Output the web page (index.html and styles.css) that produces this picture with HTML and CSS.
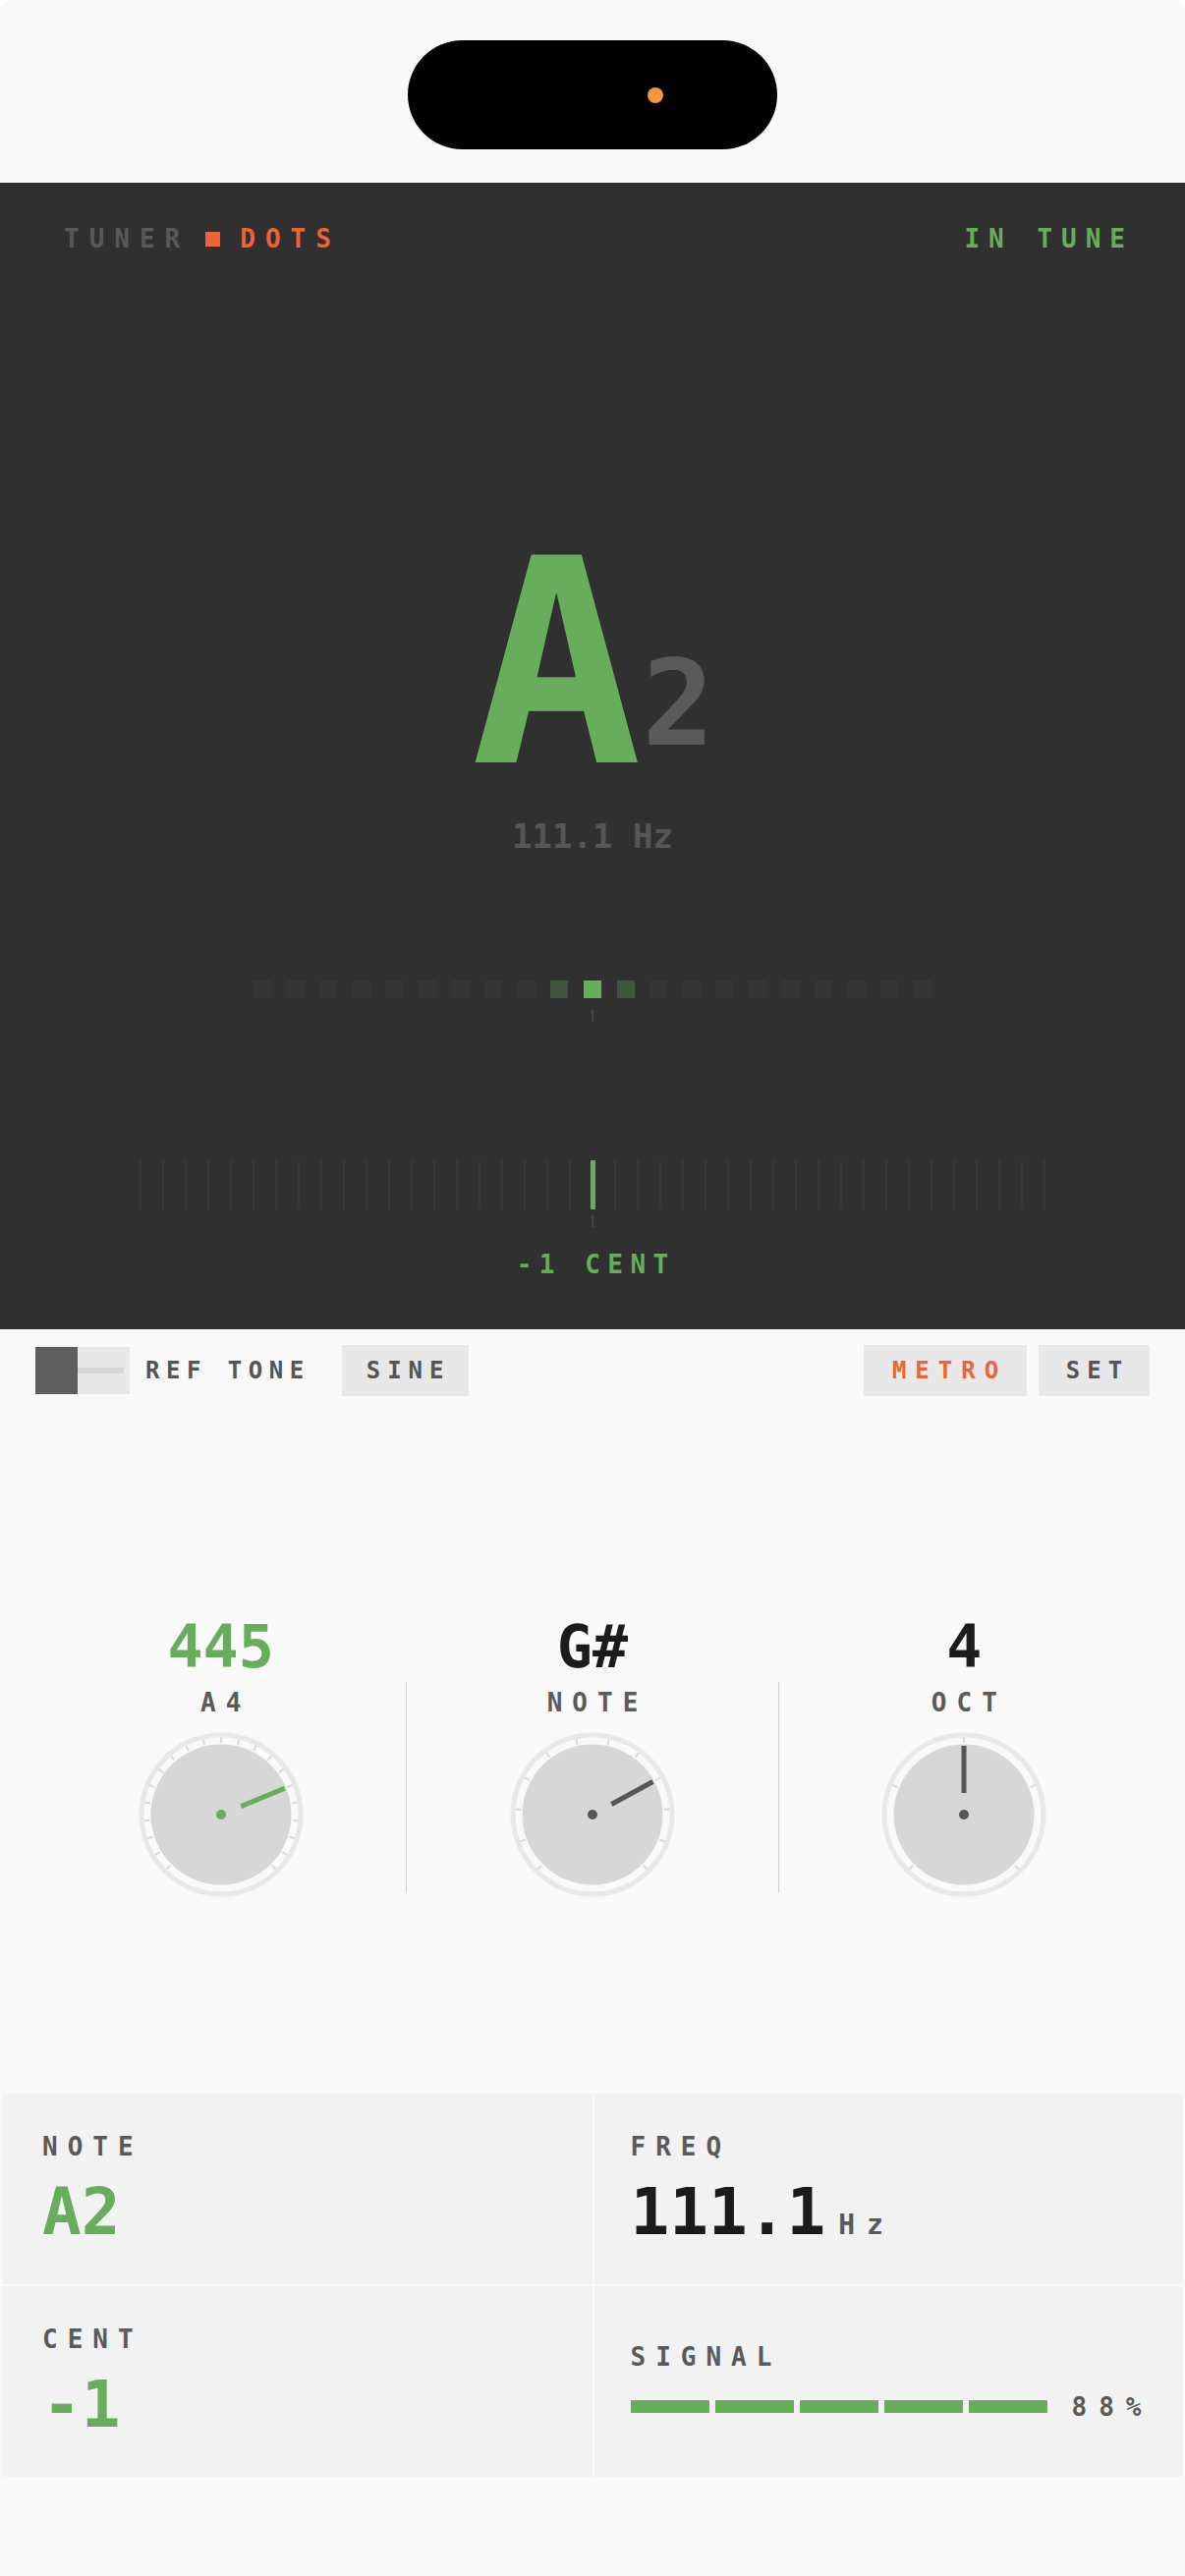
FILE: index.html
```html
<!DOCTYPE html>
<html lang="en">
<head>
<meta charset="utf-8">
<title>Tuner</title>
<link rel="stylesheet" href="styles.css">
</head>
<body>
<div class="screen">
  <div class="status">
    <div class="island"><span class="cam"></span></div>
  </div>

  <section class="tuner">
    <div class="head">
      <div class="brand"><span class="muted">TUNER</span><span class="sq"></span><span class="accent">DOTS</span></div>
      <div class="ok">IN TUNE</div>
    </div>

    <div class="note-row"><span class="big">A</span><span class="sub">2</span></div>
    <div class="hz">111.1 Hz</div>

    <div class="dots">
      <i class="dot"></i><i class="dot"></i><i class="dot"></i><i class="dot"></i><i class="dot"></i>
      <i class="dot"></i><i class="dot"></i><i class="dot"></i><i class="dot"></i><i class="dot near"></i>
      <i class="dot on"></i>
      <i class="dot near"></i><i class="dot"></i><i class="dot"></i><i class="dot"></i><i class="dot"></i>
      <i class="dot"></i><i class="dot"></i><i class="dot"></i><i class="dot"></i><i class="dot"></i>
    </div>
    <div class="mark first"></div>

    <div class="ticks">
      <i class="tk"></i><i class="tk"></i><i class="tk"></i><i class="tk"></i><i class="tk"></i>
      <i class="tk"></i><i class="tk"></i><i class="tk"></i><i class="tk"></i><i class="tk"></i>
      <i class="tk"></i><i class="tk"></i><i class="tk"></i><i class="tk"></i><i class="tk"></i>
      <i class="tk"></i><i class="tk"></i><i class="tk"></i><i class="tk"></i><i class="tk"></i>
      <i class="tk on"></i>
      <i class="tk"></i><i class="tk"></i><i class="tk"></i><i class="tk"></i><i class="tk"></i>
      <i class="tk"></i><i class="tk"></i><i class="tk"></i><i class="tk"></i><i class="tk"></i>
      <i class="tk"></i><i class="tk"></i><i class="tk"></i><i class="tk"></i><i class="tk"></i>
      <i class="tk"></i><i class="tk"></i><i class="tk"></i><i class="tk"></i><i class="tk"></i>
    </div>
    <div class="mark second"></div>
    <div class="cent">-1 CENT</div>
  </section>

  <div class="controls">
    <div class="toggle"><span class="knob"></span><span class="track"></span></div>
    <span class="lbl">REF TONE</span>
    <div class="btn sine">SINE</div>
    <div class="spacer"></div>
    <div class="btn metro">METRO</div>
    <div class="btn set">SET</div>
  </div>

  <div class="dials">
    <div class="dial">
      <div class="val g">445</div>
      <div class="cap">A4</div>
      <svg class="knobsvg" width="168" height="168" viewBox="-84 -84 168 168">
        <circle r="81" class="ring"/>
        <circle r="71.5" class="disk"/>
        <g class="tks">
          <line y1="-73" y2="-78.5" transform="rotate(-135)"/>
          <line y1="-73" y2="-78.5" transform="rotate(-121.5)"/>
          <line y1="-73" y2="-78.5" transform="rotate(-108)"/>
          <line y1="-73" y2="-78.5" transform="rotate(-94.5)"/>
          <line y1="-73" y2="-78.5" transform="rotate(-81)"/>
          <line y1="-73" y2="-78.5" transform="rotate(-67.5)"/>
          <line y1="-73" y2="-78.5" transform="rotate(-54)"/>
          <line y1="-73" y2="-78.5" transform="rotate(-40.5)"/>
          <line y1="-73" y2="-78.5" transform="rotate(-27)"/>
          <line y1="-73" y2="-78.5" transform="rotate(-13.5)"/>
          <line y1="-73" y2="-78.5" transform="rotate(0)"/>
          <line y1="-73" y2="-78.5" transform="rotate(13.5)"/>
          <line y1="-73" y2="-78.5" transform="rotate(27)"/>
          <line y1="-73" y2="-78.5" transform="rotate(40.5)"/>
          <line y1="-73" y2="-78.5" transform="rotate(54)"/>
          <line y1="-73" y2="-78.5" transform="rotate(67.5)"/>
          <line y1="-73" y2="-78.5" transform="rotate(81)"/>
          <line y1="-73" y2="-78.5" transform="rotate(94.5)"/>
          <line y1="-73" y2="-78.5" transform="rotate(108)"/>
          <line y1="-73" y2="-78.5" transform="rotate(121.5)"/>
          <line y1="-73" y2="-78.5" transform="rotate(135)"/>
        </g>
        <line class="needle green" y1="-22" y2="-70" transform="rotate(67.5)"/>
        <circle r="5" class="hub green"/>
      </svg>
    </div>
    <div class="vr"></div>
    <div class="dial">
      <div class="val">G#</div>
      <div class="cap">NOTE</div>
      <svg class="knobsvg" width="168" height="168" viewBox="-84 -84 168 168">
        <circle r="81" class="ring"/>
        <circle r="71.5" class="disk"/>
        <g class="tks">
          <line y1="-73" y2="-78.5" transform="rotate(-135)"/>
          <line y1="-73" y2="-78.5" transform="rotate(-110.45)"/>
          <line y1="-73" y2="-78.5" transform="rotate(-85.91)"/>
          <line y1="-73" y2="-78.5" transform="rotate(-61.36)"/>
          <line y1="-73" y2="-78.5" transform="rotate(-36.82)"/>
          <line y1="-73" y2="-78.5" transform="rotate(-12.27)"/>
          <line y1="-73" y2="-78.5" transform="rotate(12.27)"/>
          <line y1="-73" y2="-78.5" transform="rotate(36.82)"/>
          <line y1="-73" y2="-78.5" transform="rotate(61.36)"/>
          <line y1="-73" y2="-78.5" transform="rotate(85.91)"/>
          <line y1="-73" y2="-78.5" transform="rotate(110.45)"/>
          <line y1="-73" y2="-78.5" transform="rotate(135)"/>
        </g>
        <line class="needle" y1="-22" y2="-70" transform="rotate(61.36)"/>
        <circle r="5" class="hub"/>
      </svg>
    </div>
    <div class="vr"></div>
    <div class="dial">
      <div class="val">4</div>
      <div class="cap">OCT</div>
      <svg class="knobsvg" width="168" height="168" viewBox="-84 -84 168 168">
        <circle r="81" class="ring"/>
        <circle r="71.5" class="disk"/>
        <g class="tks">
          <line y1="-73" y2="-78.5" transform="rotate(-135)"/>
          <line y1="-73" y2="-78.5" transform="rotate(-67.5)"/>
          <line y1="-73" y2="-78.5" transform="rotate(0)"/>
          <line y1="-73" y2="-78.5" transform="rotate(67.5)"/>
          <line y1="-73" y2="-78.5" transform="rotate(135)"/>
        </g>
        <line class="needle" y1="-22" y2="-70" transform="rotate(0)"/>
        <circle r="5" class="hub"/>
      </svg>
    </div>
  </div>

  <div class="stats">
    <div class="cell left">
      <div class="k">NOTE</div>
      <div class="v g">A2</div>
    </div>
    <div class="cell right">
      <div class="k">FREQ</div>
      <div class="v">111.1<span class="unit">Hz</span></div>
    </div>
    <div class="cell left">
      <div class="k">CENT</div>
      <div class="v g">-1</div>
    </div>
    <div class="cell right">
      <div class="k">SIGNAL</div>
      <div class="sig">
        <div class="bar"><i class="seg"></i><i class="seg"></i><i class="seg"></i><i class="seg"></i><i class="seg"></i></div>
        <span class="pct">88%</span>
      </div>
    </div>
  </div>
</div>
</body>
</html>
```

FILE: styles.css
```css
* { box-sizing: border-box; }

body {
  margin: 0;
  background: #ffffff;
  font-family: "DejaVu Sans Mono", "Liberation Mono", monospace;
}

.screen {
  width: 1206px;
  height: 2622px;
  background: #f9f9f9;
  border-radius: 12px 12px 0 0;
  overflow: hidden;
}

/* status bar */
.status {
  height: 186px;
  padding-top: 41px;
  display: flex;
  justify-content: center;
  align-items: flex-start;
}
.island {
  width: 376px;
  height: 111px;
  border-radius: 56px;
  background: #000;
  display: flex;
  align-items: center;
  justify-content: flex-end;
  padding-right: 116px;
}
.cam {
  width: 16px;
  height: 16px;
  border-radius: 50%;
  background: #f5963f;
}

/* dark tuner panel */
.tuner {
  height: 1167px;
  background: #2f302f;
  display: flex;
  flex-direction: column;
  align-items: center;
}
.head {
  align-self: stretch;
  display: flex;
  justify-content: space-between;
  align-items: center;
  margin-top: 44px;
  padding: 0 52px 0 65px;
  font-size: 26px;
  line-height: 26px;
  letter-spacing: 10px;
  font-weight: bold;
}
.brand { display: flex; align-items: center; }
.muted { color: #595959; }
.accent { color: #ef6337; }
.ok { color: #67ad5b; letter-spacing: 9px; }
.sq {
  width: 15px;
  height: 15px;
  background: #ef6337;
  margin: 0 20px 0 16px;
}

.note-row {
  margin-top: 275px;
  height: 290px;
  font-size: 290px;
  line-height: 1;
  font-weight: bold;
  white-space: nowrap;
}
.big {
  display: inline-block;
  line-height: 1;
  color: #67ad5b;
}
.sub {
  display: inline-block;
  line-height: 1;
  font-size: 122px;
  color: #5a5a5a;
  vertical-align: 18px;
}

.hz {
  margin-top: 13px;
  font-size: 34px;
  line-height: 34px;
  font-weight: bold;
  color: #565656;
}

.dots {
  margin-top: 130px;
  display: flex;
  gap: 15.6px;
}
.dot {
  width: 18px;
  height: 18px;
  background: #343534;
}
.dot.near { background: #3f573d; }
.dot.on { background: #67ad5b; }

.mark {
  width: 2px;
  height: 12px;
  background: #454645;
}
.mark.first { margin-top: 12px; }
.mark.second { margin-top: 6px; }

.ticks {
  margin-top: 141px;
  display: flex;
}
.tk {
  width: 23px;
  height: 50px;
  display: flex;
  justify-content: center;
}
.tk::before {
  content: "";
  width: 2px;
  background: #363736;
}
.tk.on::before {
  width: 5px;
  background: #67ad5b;
}

.cent {
  margin-top: 25px;
  font-size: 26px;
  line-height: 26px;
  letter-spacing: 7.5px;
  padding-left: 7.5px;
  font-weight: bold;
  color: #67ad5b;
}

/* controls row */
.controls {
  display: flex;
  align-items: center;
  margin-top: 16px;
  padding: 0 36px;
  height: 52px;
}
.toggle {
  width: 96px;
  height: 48px;
  background: #e8e8e8;
  display: flex;
  align-items: center;
}
.knob {
  width: 43px;
  height: 48px;
  background: #5e5e5e;
}
.track {
  width: 47px;
  height: 6px;
  background: #d5d5d5;
}
.lbl {
  margin-left: 16px;
  font-size: 24px;
  letter-spacing: 6.5px;
  font-weight: bold;
  color: #555555;
}
.btn {
  height: 52px;
  background: #e8e8e8;
  display: flex;
  align-items: center;
  justify-content: center;
  padding-left: 7px;
  font-size: 24px;
  letter-spacing: 7px;
  font-weight: bold;
  color: #555555;
}
.sine { width: 129px; margin-left: 32px; }
.spacer { flex: 1; }
.metro { width: 166px; color: #ef6337; letter-spacing: 9px; padding-left: 9px; }
.set { width: 113px; margin-left: 12px; }

/* dials */
.dials {
  display: grid;
  grid-template-columns: 1fr 1px 1fr 1px 1fr;
  margin-top: 225px;
  padding: 0 36px;
}
.dial {
  display: flex;
  flex-direction: column;
  align-items: center;
}
.val {
  font-size: 60px;
  line-height: 60px;
  font-weight: bold;
  color: #1c1c1c;
}
.val.g { color: #67ad5b; }
.cap {
  margin-top: 14px;
  font-size: 26px;
  line-height: 26px;
  letter-spacing: 10px;
  padding-left: 10px;
  font-weight: bold;
  color: #5a5a5a;
}
.knobsvg {
  display: block;
  margin-top: 17px;
}
.ring { fill: none; stroke: #e8e8e8; stroke-width: 5; }
.disk { fill: #d7d7d7; }
.tks line { stroke: #d9d9d9; stroke-width: 2; }
.needle { stroke: #555555; stroke-width: 5; }
.needle.green { stroke: #67ad5b; }
.hub { fill: #555555; }
.hub.green { fill: #67ad5b; }
.vr {
  background: #cfcfcf;
  height: 215px;
  align-self: end;
  margin-bottom: 4px;
}

/* stats grid */
.stats {
  margin: 200px 2px 0 3px;
  display: grid;
  grid-template-columns: 1fr 1fr;
  grid-auto-rows: 194px;
  gap: 2px;
}
.cell {
  background: #f2f2f2;
  display: flex;
  flex-direction: column;
  justify-content: center;
}
.cell.left { padding-left: 40px; }
.cell.right { padding-left: 37px; }
.k {
  font-size: 26px;
  line-height: 26px;
  letter-spacing: 10px;
  font-weight: bold;
  color: #5a5a5a;
}
.v {
  margin-top: 21px;
  height: 66px;
  font-size: 66px;
  line-height: 66px;
  font-weight: bold;
  color: #1b1b1b;
  white-space: nowrap;
}
.v.g { color: #67ad5b; }
.unit {
  font-size: 28px;
  line-height: 1;
  letter-spacing: 12px;
  color: #5a5a5a;
  margin-left: 13px;
}
.sig {
  margin-top: 25px;
  height: 26px;
  display: flex;
  align-items: center;
}
.bar {
  width: 424px;
  display: flex;
  gap: 6px;
}
.seg {
  flex: 1;
  height: 13px;
  background: #67ad5b;
}
.pct {
  margin-left: 25px;
  font-size: 26px;
  line-height: 26px;
  letter-spacing: 12px;
  font-weight: bold;
  color: #5a5a5a;
}
```
